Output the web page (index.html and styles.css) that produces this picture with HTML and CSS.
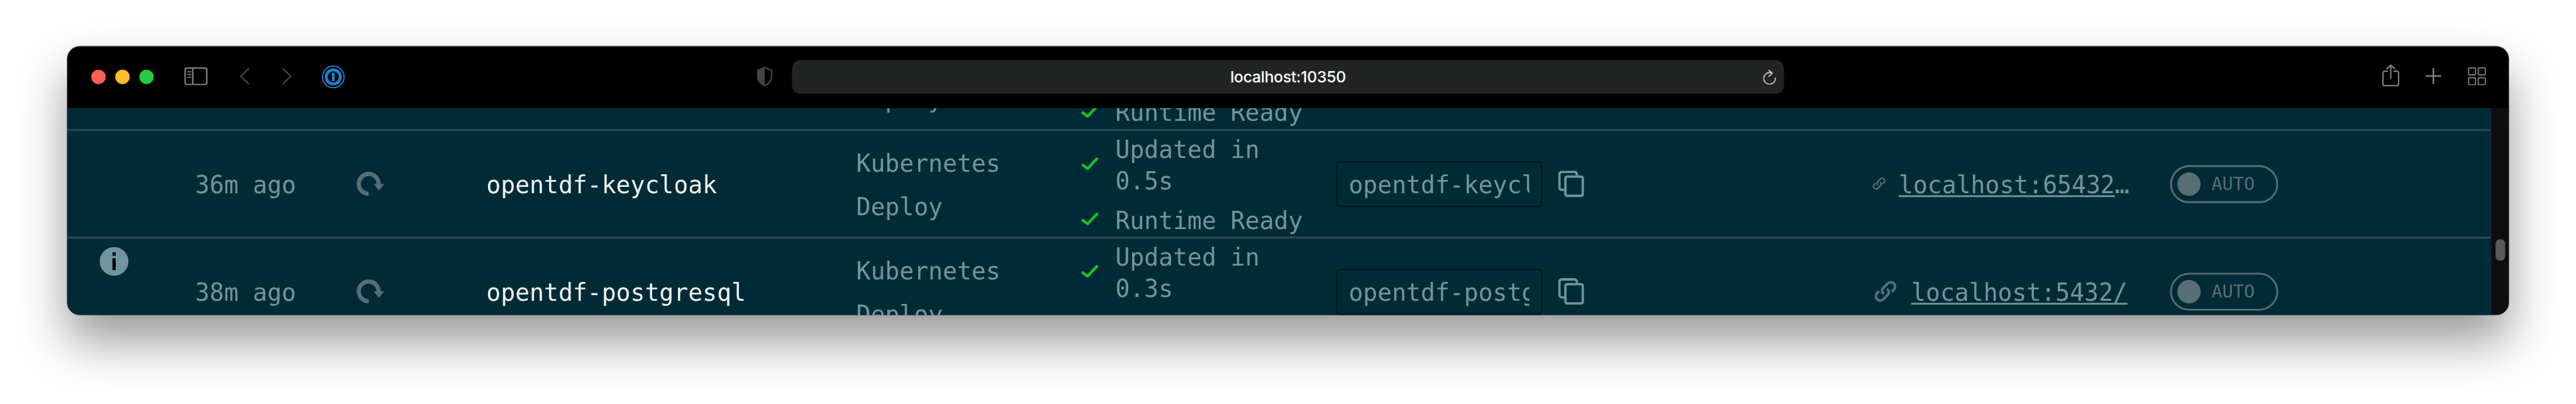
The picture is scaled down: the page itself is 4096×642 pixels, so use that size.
FILE: index.html
```html
<!DOCTYPE html>
<html lang="en">
<head>
<meta charset="utf-8">
<title>localhost:10350</title>
<link rel="stylesheet" href="styles.css">
</head>
<body>
<svg class="defs" aria-hidden="true">
  <symbol id="reload" viewBox="0 0 46 41"><path d="M20 36.5A16.5 16.5 0 1 1 36.5 20" fill="none" stroke="currentColor" stroke-width="7"/><path d="M28.5 20h17.2L37 31z" fill="currentColor"/></symbol>
  <symbol id="check" viewBox="0 0 28 21"><path d="M2.3 12.7l7.9 6L25.7 2.3" fill="none" stroke="currentColor" stroke-width="4.6" stroke-linecap="round" stroke-linejoin="round"/></symbol>
  <symbol id="copy" viewBox="0 0 43 44"><path d="M31 8V6a4 4 0 0 0-4-4H6a4 4 0 0 0-4 4v22a4 4 0 0 0 4 4h4" fill="none" stroke="currentColor" stroke-width="4"/><rect x="12" y="10" width="29" height="32" rx="3" fill="none" stroke="currentColor" stroke-width="4"/></symbol>
  <symbol id="link" viewBox="0 0 36 36"><g fill="none" stroke="currentColor" stroke-width="4.2"><path d="M15.8 22c-4.2-2-4.6-6.600-1.600-9.600l7.300-7.600a7.300 7.300 0 0 1 10.400 10.400l-3.400 3.600"/><path transform="rotate(180 18 18)" d="M15.8 22c-4.2-2-4.6-6.600-1.600-9.600l7.300-7.600a7.300 7.300 0 0 1 10.400 10.400l-3.400 3.600"/></g></symbol>
</svg>
<div class="stage">
  <div class="window">
    <header class="toolbar">
      <div class="lights"><i class="light red"></i><i class="light yellow"></i><i class="light green"></i></div>
      <svg class="sidebar-icon" viewBox="0 0 39 30" fill="none" stroke="#7f7f7f" stroke-width="2.500"><rect x="1.300" y="1.300" width="36" height="27.400" rx="3"/><path d="M14 1v28"/><path d="M5.500 7.500H11M5.500 12H11M5.500 16.500H11" stroke-width="1.800" stroke-linecap="round"/></svg>
      <svg class="chevron back" viewBox="0 0 16 28"><path d="M15 1.300L1.700 14 15 26.700"/></svg>
      <svg class="chevron forward" viewBox="0 0 16 28"><path d="M1 1.300L14.300 14 1 26.700"/></svg>
      <svg class="onepassword" viewBox="0 0 38 38" fill="none" stroke="#1a80cf"><circle cx="19" cy="19" r="18" stroke-width="2"/><circle cx="19" cy="19" r="11.700" stroke-width="5"/><path d="M19 12v14" stroke-width="4.500"/></svg>
      <svg class="shield" viewBox="0 0 27 33"><path d="M13.500 1.300L25 6v12c0 6-4.500 10-11.500 13.500C6.500 28 2 24 2 18V6z" fill="none" stroke="#434343" stroke-width="2.500"/><path d="M13.500 1L1.500 6v12c0 6 5 10.500 12 14z" fill="#434343"/></svg>
      <div class="address">
        <span class="url">localhost:10350</span>
        <svg class="refresh" viewBox="0 0 22 25" fill="none" stroke="#c4c4c4" stroke-width="1.900" stroke-linecap="round" stroke-linejoin="round"><path d="M20.800 14a9.800 9.800 0 1 1-9.800-9.300l4 .5M10 1l5.500 4.800L10 11"/></svg>
      </div>
      <svg class="share" viewBox="0 0 29 37" fill="none" stroke="#7f7f7f" stroke-width="2.300" stroke-linecap="round"><path d="M9 11.500H4.500a3 3 0 0 0-3 3V32.500a3 3 0 0 0 3 3h20a3 3 0 0 0 3-3V14.500a3 3 0 0 0-3-3H20M14.500 23V1.500M8 7.500l6.500-6 6.500 6"/></svg>
      <svg class="plus" viewBox="0 0 27 27"><path d="M13.500 1.300v24.400M1.300 13.500h24.400" stroke="#7f7f7f" stroke-width="2.700" stroke-linecap="round"/></svg>
      <svg class="tabs" viewBox="0 0 30 30" fill="none" stroke="#7f7f7f" stroke-width="2"><rect x="1" y="1" width="11.700" height="11.700" rx="1.500"/><rect x="17.300" y="1" width="11.700" height="11.700" rx="1.500"/><rect x="1" y="17.300" width="11.700" height="11.700" rx="1.500"/><rect x="17.300" y="17.300" width="11.700" height="11.700" rx="1.500"/></svg>
    </header>
    <div class="viewport">
      <main class="table">
        <div class="row row-top">
          <span></span><span></span><span></span>
          <div class="type"><span>Deploy</span></div>
          <div class="status"><div class="step"><svg class="check"><use href="#check"/></svg><span>Runtime Ready</span></div></div>
        </div>
        <div class="row">
          <span class="time">36m ago</span>
          <svg class="reload"><use href="#reload"/></svg>
          <span class="name">opentdf-keycloak</span>
          <div class="type"><span>Kubernetes</span><span>Deploy</span></div>
          <div class="status">
            <div class="step"><svg class="check"><use href="#check"/></svg><span>Updated in<br>0.5s</span></div>
            <div class="step"><svg class="check"><use href="#check"/></svg><span>Runtime Ready</span></div>
          </div>
          <div class="pod"><div class="field"><span>opentdf-keycloak</span></div><svg class="copy"><use href="#copy"/></svg></div>
          <div class="endpoint"><svg class="link-small"><use href="#link"/></svg><span><a>localhost:65432</a>…</span></div>
          <div class="toggle"><i class="knob"></i><span>AUTO</span></div>
        </div>
        <div class="row">
          <span class="time">38m ago</span>
          <svg class="reload"><use href="#reload"/></svg>
          <span class="name">opentdf-postgresql</span>
          <div class="type"><span>Kubernetes</span><span>Deploy</span></div>
          <div class="status">
            <div class="step"><svg class="check"><use href="#check"/></svg><span>Updated in<br>0.3s</span></div>
          </div>
          <div class="pod"><div class="field"><span>opentdf-postgresql</span></div><svg class="copy"><use href="#copy"/></svg></div>
          <div class="endpoint endpoint-short"><svg class="link-large"><use href="#link"/></svg><span><a>localhost:5432/</a></span></div>
          <div class="toggle"><i class="knob"></i><span>AUTO</span></div>
        </div>
      </main>
      <div class="scrollbar"><i class="thumb"></i></div>
      <svg class="info" viewBox="0 0 48 48"><circle cx="24" cy="24" r="24" fill="#7095a0"/><path d="M21.300 9h5.400v5.400h-5.400zM21.300 18.700h5.400v19.800h-5.400z" fill="#000"/></svg>
    </div>
  </div>
</div>
</body>
</html>
```
FILE: styles.css
```css
html, body { margin: 0; height: 642px; overflow: hidden; background: #fff; }
.defs { position: absolute; width: 0; height: 0; }
svg { display: block; flex: none; }

.stage {
  width: 4290px;
  height: 673px;
  padding: 77px 112px 0;
  box-sizing: border-box;
  transform: scale(0.95478);
  transform-origin: 0 0;
}
.window {
  width: 4066px;
  height: 447px;
  border-radius: 21px;
  background: #000;
  box-shadow: 0 0 0 1px rgba(0, 0, 0, .35), 0 44px 80px rgba(0, 0, 0, .4);
}

/* Browser toolbar */
.toolbar {
  display: flex;
  align-items: center;
  height: 103px;
  padding: 0 0 2px 40px;
  box-sizing: border-box;
  border-top: 1px solid #4a4a4a;
  border-radius: 21px 21px 0 0;
}
.lights { display: flex; gap: 16px; }
.light { width: 24px; height: 24px; border-radius: 50%; }
.red { background: #ff5f57; }
.yellow { background: #febc2e; }
.green { background: #28c840; }
.sidebar-icon { width: 39px; height: 30px; margin: -2px 0 0 51px; }
.chevron { width: 16px; height: 28px; margin-top: -2px; fill: none; stroke: #3f3f3f; stroke-width: 2.6; stroke-linecap: round; }
.back { margin-left: 53px; }
.forward { margin-left: 55px; }
.onepassword { width: 38px; height: 38px; margin-left: 50px; }
.shield { width: 27px; height: 33px; margin: -1px 0 0 686px; }
.address {
  display: grid;
  grid-template-columns: 35px 1fr 35px;
  align-items: center;
  width: 1652px;
  height: 56px;
  margin-left: 32px;
  border-radius: 14px;
  background: #222423;
}
.url {
  grid-column: 2;
  text-align: center;
  font: 500 26px/56px Inter, "Liberation Sans", sans-serif;
  letter-spacing: -.35px;
  color: #fff;
}
.refresh { width: 22px; height: 25px; }
.share { width: 29px; height: 37px; margin: -5px 0 0 996px; }
.plus { width: 27px; height: 27px; margin: -3px 0 0 43px; }
.tabs { width: 30px; height: 30px; margin: -2px 0 0 44px; }

/* Page content */
.viewport {
  position: relative;
  display: flex;
  height: 344px;
  overflow: hidden;
  background: #002b36;
  border-radius: 0 0 21px 21px;
}
.table { width: 4036px; margin-top: -141px; }
.row {
  display: grid;
  grid-template-columns: 269px 216px 616px 375px 424px 894px 495px 180px;
  align-items: center;
  height: 176px;
  padding-left: 213px;
  border-bottom: 3px solid #2d4b54;
  font: 40px/52.8px "DejaVu Sans Mono", monospace;
  letter-spacing: -.082px;
  color: #7095a0;
  white-space: pre;
}
.row:last-child { border-bottom: 0; }
.time, .name, .endpoint span { padding-top: 4px; }
.name { color: #eef1f1; }
.reload { width: 46px; height: 41px; color: #586e75; }
.type { display: flex; flex-direction: column; line-height: 72px; padding-top: 4px; }
.status { display: flex; flex-direction: column; gap: 12.7px; align-self: start; padding-top: 4.5px; }
.step { display: flex; align-items: center; gap: 28.5px; }
.check { width: 28px; height: 21px; margin-top: -5px; color: #20ba31; }
.row-top .type { align-self: end; padding-bottom: 14px; }
.row-top .status { align-self: end; padding-bottom: 1px; }
.pod { display: flex; align-items: center; gap: 26px; }
.field {
  width: 344px;
  height: 77px;
  box-sizing: border-box;
  padding: 0 19px 0 18px;
  border: 3px solid #001b20;
  border-radius: 6px;
}
.field span { display: block; overflow: hidden; line-height: 74px; }
.copy { width: 43px; height: 44px; }
.endpoint { display: flex; align-items: center; gap: 22px; }
.endpoint-short { gap: 25px; padding-left: 3px; }
.endpoint a { text-decoration: underline; text-decoration-thickness: 3px; text-underline-offset: 3px; text-decoration-skip-ink: none; }
.link-small { width: 21px; height: 21px; color: #586e75; }
.link-large { width: 36px; height: 36px; color: #586e75; }
.toggle {
  display: flex;
  align-items: center;
  gap: 18px;
  height: 63px;
  padding-left: 9px;
  box-sizing: border-box;
  border: 3px solid #586e75;
  border-radius: 32px;
  font-size: 30px;
  color: #586e75;
}
.knob { width: 39px; height: 39px; border-radius: 50%; background: #586e75; }
.scrollbar { width: 30px; box-sizing: border-box; border-left: 1px solid #2a2a2a; background: #0e0e0e; padding: 218px 0 0 7px; }
.thumb { display: block; width: 16px; height: 36px; border-radius: 8px; background: #5a5a5a; }
.info { position: absolute; left: 54px; top: 231px; width: 48px; height: 48px; }
```
